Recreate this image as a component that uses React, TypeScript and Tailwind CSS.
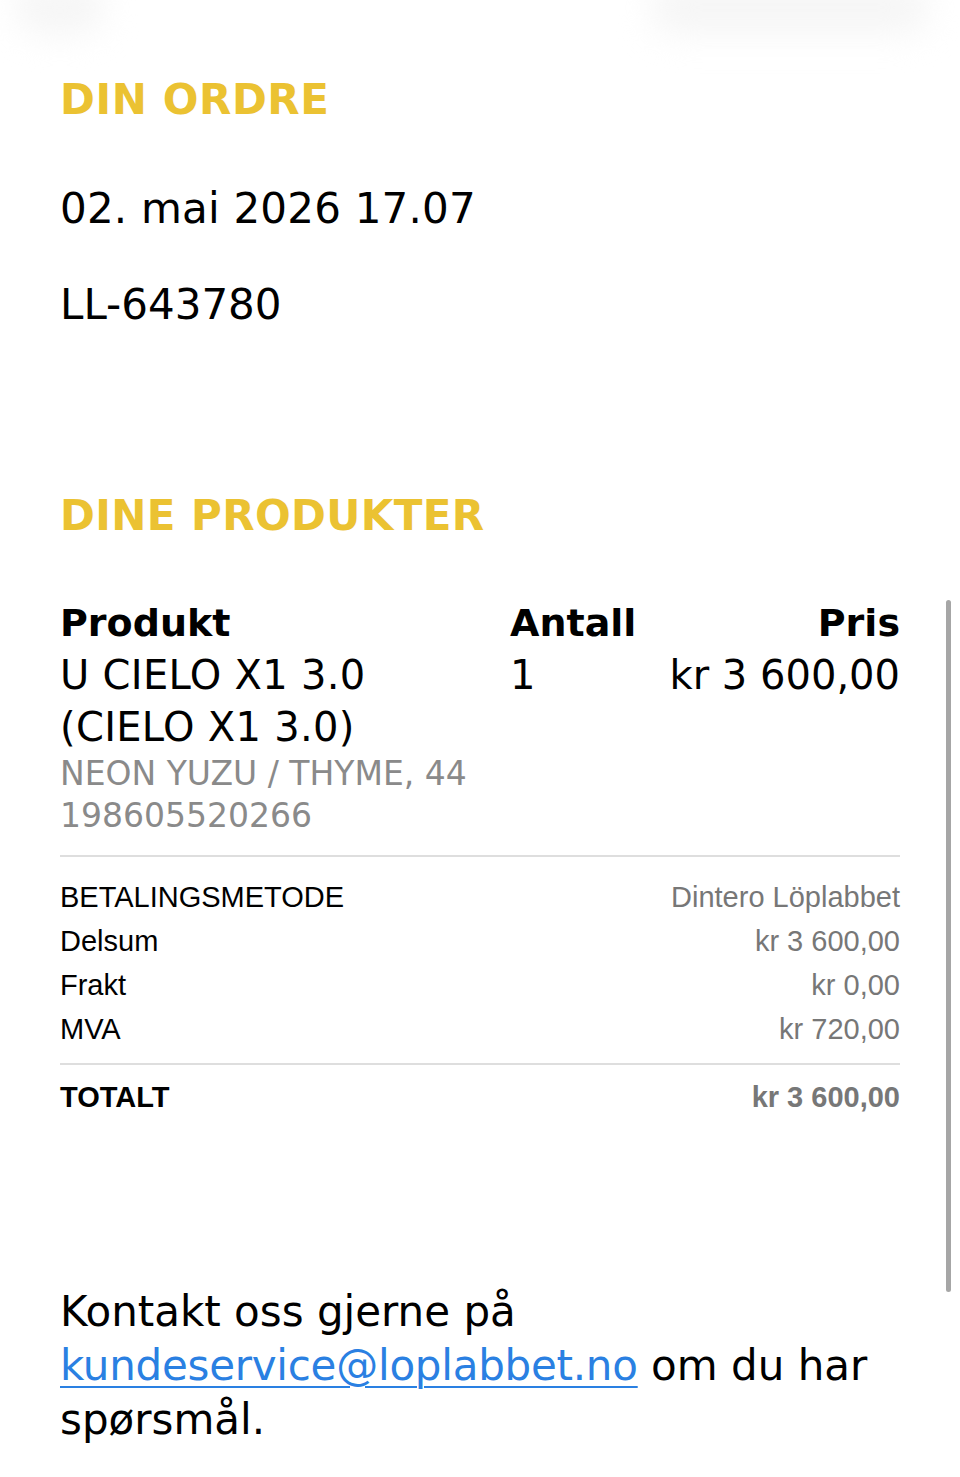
import React from 'react';

const YELLOW = 'text-[#ebc232]';

const summary = [
  { label: 'BETALINGSMETODE', value: 'Dintero Löplabbet' },
  { label: 'Delsum', value: 'kr 3 600,00' },
  { label: 'Frakt', value: 'kr 0,00' },
  { label: 'MVA', value: 'kr 720,00' },
];

export default function App() {
  return (
    <div className="relative min-h-[1477px] overflow-hidden bg-white font-['DejaVu_Sans',sans-serif] text-black">
      {/* faint header shadows at the very top */}
      <div className="pointer-events-none absolute left-[15px] top-[-20px] h-[55px] w-[90px] rounded-full bg-[#f6f6f6] blur-[16px]" />
      <div className="pointer-events-none absolute left-[650px] top-[-20px] h-[55px] w-[280px] rounded-full bg-[#f6f6f6] blur-[16px]" />

      <div className="px-[60px] pt-[75px]">
        {/* Din ordre */}
        <h2 className={`text-[42px] font-bold leading-[50px] tracking-[0.6px] ${YELLOW}`}>DIN ORDRE</h2>
        <p className="mt-[59px] text-[42px] leading-[50px] tracking-[0.2px]">02. mai 2026 17.07</p>
        <p className="mt-[46px] text-[42px] leading-[50px]">LL-643780</p>

        {/* Dine produkter */}
        <h2 className={`mt-[161px] text-[42px] font-bold leading-[50px] tracking-[0.4px] ${YELLOW}`}>
          DINE PRODUKTER
        </h2>

        <div className="mt-[56px] grid grid-cols-[450px_1fr_auto]">
          <div className="text-[38px] font-bold leading-[52px]">Produkt</div>
          <div className="text-[38px] font-bold leading-[52px]">Antall</div>
          <div className="text-right text-[38px] font-bold leading-[52px]">Pris</div>

          <div>
            <div className="max-w-[420px] text-[40px] leading-[52px] tracking-[0.3px]">U CIELO X1 3.0 (CIELO X1 3.0)</div>
            <div className="text-[33px] leading-[42px] text-[#8a8a8a]">NEON YUZU / THYME, 44</div>
            <div className="text-[33px] leading-[42px] text-[#8a8a8a]">198605520266</div>
          </div>
          <div className="text-[40px] leading-[52px]">1</div>
          <div className="text-right text-[40px] leading-[52px]">kr 3 600,00</div>
        </div>

        <div className="mt-[18px] h-[2px] bg-[#dedede]" />

        {/* Summary */}
        <div className="mt-[18px] font-['Liberation_Sans',Arial,sans-serif] text-[29px]">
          {summary.map((row) => (
            <div key={row.label} className="flex justify-between leading-[44px]">
              <span>{row.label}</span>
              <span className="text-[#777777]">{row.value}</span>
            </div>
          ))}
        </div>

        <div className="mt-[12px] h-[2px] bg-[#dedede]" />

        <div className="mt-[10px] flex justify-between font-['Liberation_Sans',Arial,sans-serif] text-[29px] font-bold leading-[44px]">
          <span>TOTALT</span>
          <span className="text-[#777777]">kr 3 600,00</span>
        </div>

        {/* Contact */}
        <p className="mt-[166px] max-w-[840px] text-[42px] leading-[54px]">
          Kontakt oss gjerne på{' '}
          <a
            href="#"
            className="text-[#2a80e2] underline decoration-[2px] underline-offset-[6px] tracking-[-0.25px]"
          >
            kundeservice@loplabbet.no
          </a>{' '}
          om du har spørsmål.
        </p>
      </div>

      {/* overlay scrollbar */}
      <div className="absolute left-[946px] top-[600px] h-[692px] w-[5px] rounded-full bg-[#a6a6a6]" />
    </div>
  );
}
